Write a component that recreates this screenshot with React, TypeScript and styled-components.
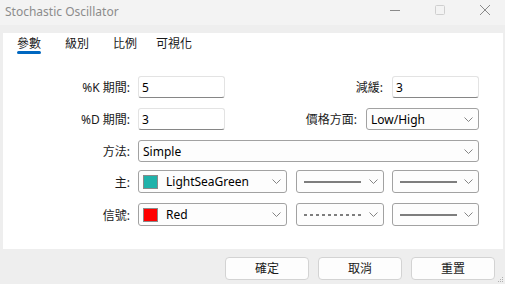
import * as React from 'react';
import styled, { createGlobalStyle } from 'styled-components';

const GlobalStyle = createGlobalStyle`
	html, body {
		margin: 0;
		padding: 0;
		background: #eeeeee;
	}
	body {
		font-family: "Noto Sans", "Noto Sans CJK TC", sans-serif;
		font-size: 12px;
		color: #1a1a1a;
	}
`;

const Window = styled.div`
	width: 505px;
	height: 284px;
	display: flex;
	flex-direction: column;
	background: #eeeeee;
	overflow: hidden;
	position: relative;
`;

const TitleBar = styled.div`
	height: 25px;
	flex: none;
	display: flex;
	align-items: center;
	padding-left: 5px;
	background: #f3f3f3;
`;

const Title = styled.div`
	color: #8c8c8c;
	font-size: 12px;
	line-height: 16px;
	margin-top: -2px;
`;

const Controls = styled.div`
	margin-left: auto;
	display: flex;
	align-items: center;
	gap: 35px;
	padding-right: 15px;
	margin-top: -6px;
`;

const Body = styled.div`
	flex: 1;
	display: flex;
	flex-direction: column;
	padding: 8px 2px 0 3px;
`;

const Panel = styled.div`
	height: 216px;
	background: #ffffff;
	display: flex;
	flex-direction: column;
`;

const Tabs = styled.div`
	display: flex;
	gap: 24px;
	padding: 3px 0 0 14px;
`;

const Tab = styled.div<{ $active?: boolean; $shift?: number }>`
	display: flex;
	flex-direction: column;
	align-items: stretch;
	line-height: 15px;
	color: #1a1a1a;
	margin-left: ${(p) => (p.$shift ? `${p.$shift}px` : '0')};

	&::after {
		content: '';
		height: 3px;
		border-radius: 2px;
		background: ${(p) => (p.$active ? '#0067c0' : 'transparent')};
	}
`;

const Form = styled.div`
	display: flex;
	flex-direction: column;
	margin-top: 22px;
`;

const Row = styled.div<{ $top?: number; $h?: number }>`
	display: grid;
	grid-template-columns: 127px 341px;
	column-gap: 8px;
	height: ${(p) => p.$h ?? 22}px;
	margin-top: ${(p) => p.$top ?? 0}px;
`;

const Label = styled.div`
	text-align: right;
	align-self: center;
	white-space: nowrap;
`;

const Field = styled.div`
	display: flex;
	align-items: stretch;
	justify-content: space-between;
`;

const Group = styled.div`
	display: flex;
	align-items: stretch;
	gap: 9px;
`;

const TextBox = styled.div<{ $w: number }>`
	width: ${(p) => p.$w}px;
	box-sizing: border-box;
	border: 1px solid #e3e3e3;
	border-bottom-color: #868686;
	border-radius: 3px;
	padding-left: 3px;
	display: flex;
	align-items: center;
	color: #000;
	background: #fff;
`;

const Select = styled.div<{ $w?: number }>`
	width: ${(p) => (p.$w ? `${p.$w}px` : '100%')};
	box-sizing: border-box;
	border: 1px solid #a2a2a2;
	border-radius: 3px;
	padding: 0 5px 0 4px;
	display: flex;
	align-items: center;
	background: #fdfdfd;
	color: #000;
`;

const SelectValue = styled.div`
	flex: 1;
	display: flex;
	align-items: center;
	gap: 8px;
	white-space: nowrap;
	overflow: hidden;
`;

const Swatch = styled.span<{ $color: string }>`
	width: 15px;
	height: 14px;
	box-sizing: border-box;
	border: 1px solid #8a8a8a;
	background: ${(p) => p.$color};
	flex: none;
`;

const Footer = styled.div`
	display: flex;
	justify-content: flex-end;
	gap: 9px;
	padding: 8px 8px 0 0;
`;

const Button = styled.button`
	width: 84px;
	height: 23px;
	box-sizing: border-box;
	border: 1px solid #d3d3d3;
	border-radius: 4px;
	background: #fdfdfd;
	font: inherit;
	color: #1a1a1a;
	padding: 0;
	line-height: 1;
`;

const Grip = styled.svg`
	position: absolute;
	right: 1px;
	bottom: 1px;
`;

const Chevron = () => (
	<svg width="9" height="5" viewBox="0 0 9 5" style={{ flex: 'none' }}>
		<path d="M0.5 0.5 L4.5 4.5 L8.5 0.5" fill="none" stroke="#777" strokeWidth="0.9" />
	</svg>
);

const LineStyle = ({ dashed }: { dashed?: boolean }) => (
	<svg width="57" height="2" viewBox="0 0 57 2" style={{ marginLeft: 3 }}>
		<line x1="0" y1="1" x2="57" y2="1" stroke="#000" strokeWidth="1.2" strokeDasharray={dashed ? '3 3' : undefined} />
	</svg>
);

const ColorSelect = ({ color, name }: { color: string; name: string }) => (
	<Select $w={149}>
		<SelectValue>
			<Swatch $color={color} />
			{name}
		</SelectValue>
		<Chevron />
	</Select>
);

const LineSelect = ({ w, dashed }: { w: number; dashed?: boolean }) => (
	<Select $w={w}>
		<SelectValue>
			<LineStyle dashed={dashed} />
		</SelectValue>
		<Chevron />
	</Select>
);

const App = () => {
	return (
		<>
			<GlobalStyle />
			<Window>
				<TitleBar>
					<Title>Stochastic Oscillator</Title>
					<Controls>
						<svg width="10" height="10" viewBox="0 0 10 10">
							<line x1="0" y1="5.5" x2="10" y2="5.5" stroke="#8a8a8a" strokeWidth="1" />
						</svg>
						<svg width="10" height="10" viewBox="0 0 10 10">
							<rect x="0.5" y="0.5" width="9" height="9" fill="none" stroke="#cfcfcf" strokeWidth="1" rx="1" />
						</svg>
						<svg width="10" height="10" viewBox="0 0 10 10">
							<path d="M0 0 L10 10 M10 0 L0 10" stroke="#8a8a8a" strokeWidth="1" />
						</svg>
					</Controls>
				</TitleBar>
				<Body>
					<Panel>
						<Tabs>
							<Tab $active>參數</Tab>
							<Tab>級別</Tab>
							<Tab>比例</Tab>
							<Tab $shift={-5}>可視化</Tab>
						</Tabs>
						<Form>
							<Row>
								<Label>%K 期間:</Label>
								<Field>
									<TextBox $w={87}>5</TextBox>
									<Group>
										<Label>減緩:</Label>
										<TextBox $w={87}>3</TextBox>
									</Group>
								</Field>
							</Row>
							<Row $top={10}>
								<Label>%D 期間:</Label>
								<Field>
									<TextBox $w={87}>3</TextBox>
									<Group>
										<Label>價格方面:</Label>
										<Select $w={113}>
											<SelectValue>Low/High</SelectValue>
											<Chevron />
										</Select>
									</Group>
								</Field>
							</Row>
							<Row $top={10}>
								<Label>方法:</Label>
								<Field>
									<Select>
										<SelectValue>Simple</SelectValue>
										<Chevron />
									</Select>
								</Field>
							</Row>
							<Row $top={8} $h={23}>
								<Label>主:</Label>
								<Field>
									<ColorSelect color="#20b2aa" name="LightSeaGreen" />
									<LineSelect w={88} />
									<LineSelect w={87} />
								</Field>
							</Row>
							<Row $top={10} $h={23}>
								<Label>信號:</Label>
								<Field>
									<ColorSelect color="#ff0000" name="Red" />
									<LineSelect w={88} dashed />
									<LineSelect w={87} />
								</Field>
							</Row>
						</Form>
					</Panel>
					<Footer>
						<Button>確定</Button>
						<Button>取消</Button>
						<Button>重置</Button>
					</Footer>
				</Body>
				<Grip width="6" height="6" viewBox="0 0 6 6">
					<rect x="4" y="0" width="1" height="1" fill="#b0b0b0" />
					<rect x="2" y="2" width="1" height="1" fill="#b0b0b0" />
					<rect x="4" y="2" width="1" height="1" fill="#b0b0b0" />
					<rect x="0" y="4" width="1" height="1" fill="#b0b0b0" />
					<rect x="2" y="4" width="1" height="1" fill="#b0b0b0" />
					<rect x="4" y="4" width="1" height="1" fill="#b0b0b0" />
				</Grip>
			</Window>
		</>
	);
};

export default App;
